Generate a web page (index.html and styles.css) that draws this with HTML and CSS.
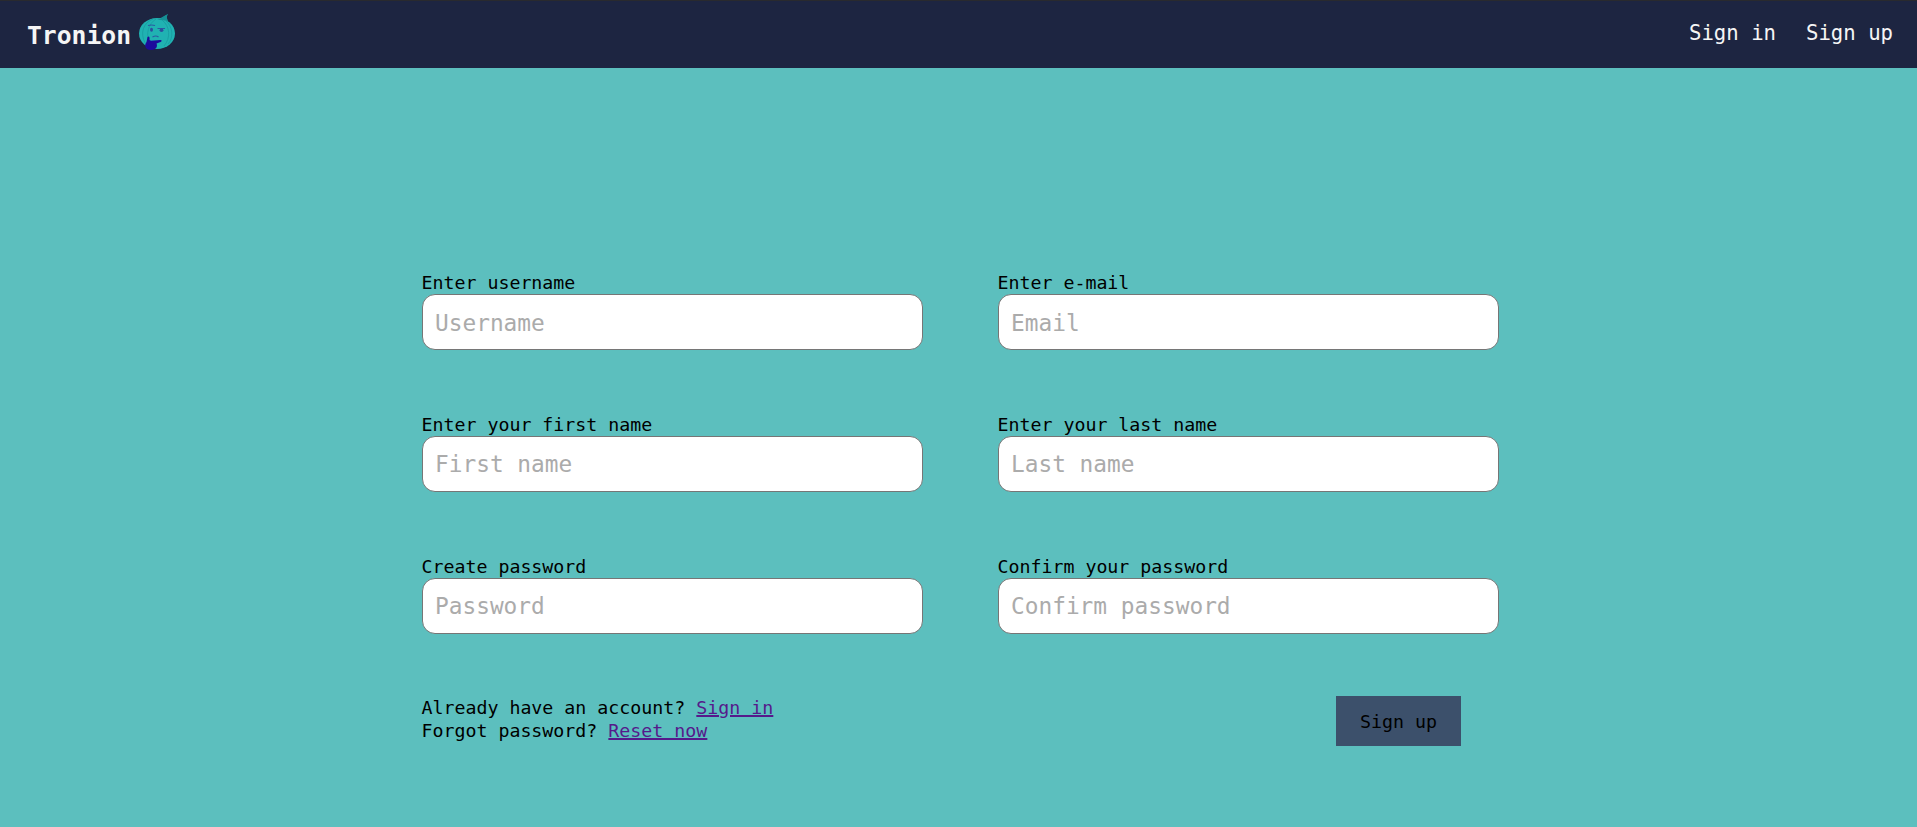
FILE: index.html
```html
<!DOCTYPE html>
<html lang="en">
<head>
<meta charset="utf-8">
<title>Tronion</title>
<link rel="stylesheet" href="styles.css">
</head>
<body>
<header class="header">
  <a class="brand" href="#">
    <span class="brand-name">Tronion</span>
    <svg class="logo" viewBox="0 0 36 37" aria-hidden="true">
      <path fill="#168f95" d="M16 6C21 5 24 2 29 0c-2 3-1 4 0 7l-6 3z"/>
      <ellipse cx="18" cy="19.5" rx="18" ry="15.500" fill="#20b2b2"/>
      <path fill="#168f95" d="M18 6C22 5 25 2 29 0c-2 3-1 4-.5 7q-5-1.500-10.500-1z"/>
      <path fill="none" stroke="#189da2" stroke-width=".9" d="M14 5C4 9 1 19 6 29M17 5C9 10 7 20 10 28M23 6c8 6 9 18 2 26M26 6c8 6 9 18 3 24"/>
      <path fill="none" stroke="#2b5aa2" stroke-width="1.200" d="M9 11.500q3.500-1 7 0M18.500 14.500h7.500M13.500 23q3.500-2 6 0"/>
      <ellipse cx="12.500" cy="15.800" rx="1.500" ry="2" fill="#2b4f9e"/>
      <ellipse cx="22.500" cy="16.200" rx="1.900" ry="1.700" fill="#2b4f9e"/>
      <path fill="#1c0b9c" d="M8.500 23c1.500-1.500 2.500 0 2 3l1.500.8L21.500 26c1.500 0 1.500 1.500 0 1.900L17.500 29.500c1.500 3-.5 6.500-5.500 6.500-6 0-7-5-4.500-8z"/>
    </svg>
  </a>
  <nav class="nav">
    <a href="#">Sign in</a>
    <a href="#">Sign up</a>
  </nav>
</header>
<main class="page">
  <form class="form">
    <label class="field">Enter username<input type="text" placeholder="Username"></label>
    <label class="field">Enter e-mail<input type="text" placeholder="Email"></label>
    <label class="field">Enter your first name<input class="raised" type="text" placeholder="First name"></label>
    <label class="field">Enter your last name<input class="raised" type="text" placeholder="Last name"></label>
    <label class="field">Create password<input class="raised" type="password" placeholder="Password"></label>
    <label class="field">Confirm your password<input class="raised" type="password" placeholder="Confirm password"></label>
    <div class="links">
      <div>Already have an account? <a href="#">Sign in</a></div>
      <div>Forgot password? <a href="#">Reset now</a></div>
    </div>
    <div class="actions"><button class="submit" type="button">Sign up</button></div>
  </form>
</main>
</body>
</html>
```
FILE: styles.css
```css
* { box-sizing: border-box; }
body {
  margin: 0;
  height: 827px;
  overflow: hidden;
  background: #5cbfbe;
  color: #000;
  font-family: Consolas, "DejaVu Sans Mono", monospace;
  font-size: 18.27px;
  line-height: 23px;
}
.header {
  display: flex;
  justify-content: space-between;
  height: 68px;
  padding: 0 24px 0 27px;
  border-top: 1px solid #292a2e;
  background: #1d2541;
}
.header a { color: #f5f5f5; text-decoration: none; }
.brand { display: flex; align-items: flex-start; gap: 8px; }
.brand-name {
  padding-top: 18px;
  font-size: 24.7px;
  font-weight: bold;
  line-height: 34px;
}
.logo { width: 36px; height: 37px; margin-top: 13px; }
.nav { display: flex; gap: 30px; padding-top: 17px; font-size: 20.65px; line-height: 30px; }
.form {
  display: grid;
  grid-template-columns: 501px 501px;
  column-gap: 75px;
  row-gap: 63px;
  padding: 203px 0 0 422px;
}
.field { display: flex; flex-direction: column; text-indent: -0.6px; }
.field input {
  height: 56px;
  padding: 1px 12px 0;
  border: 1px solid #767676;
  border-radius: 13px;
  background: #fff;
  font-family: inherit;
  font-size: 22.8px;
}
.field .raised { padding: 0 12px 1px; }
.field input::placeholder { color: #ababab; opacity: 1; }
.links, .actions { margin-top: -1px; }
.links { text-indent: -0.6px; }
.links a { color: #551a8b; text-decoration-thickness: 2px; text-underline-offset: 1px; }
.actions { display: flex; justify-content: flex-end; padding-right: 38px; }
.submit {
  width: 125px;
  height: 50px;
  padding: 0;
  border: 0;
  background: #3c506b;
  color: #000;
  font: inherit;
}
```
